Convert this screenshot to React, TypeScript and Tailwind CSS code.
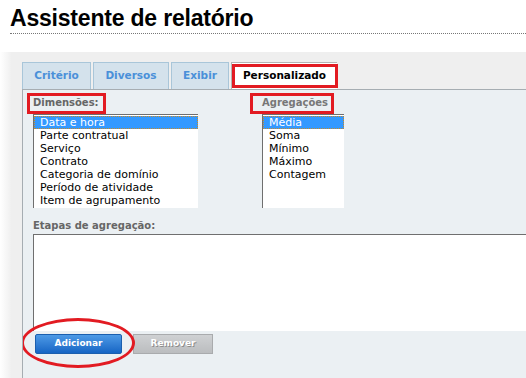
import React from "react";

const dims = [
  "Data e hora",
  "Parte contratual",
  "Serviço",
  "Contrato",
  "Categoria de domínio",
  "Período de atividade",
  "Item de agrupamento",
];

const aggs = ["Média", "Soma", "Mínimo", "Máximo", "Contagem"];

const ListBox = ({ items, width }: { items: string[]; width: string }) => (
  <div
    className={`${width} h-[94px] bg-white border-t border-l border-[#6f6f6f] pt-px pl-px overflow-hidden`}
  >
    {items.map((it, i) => (
      <div
        key={it}
        className={
          i === 0
            ? "h-[13px] leading-[12px] pl-[5px] bg-[#3399ff] text-white border border-dotted border-[#c58a2a] -ml-px"
            : "h-[13px] leading-[13px] pl-[5px] text-black"
        }
      >
        {it}
      </div>
    ))}
  </div>
);

const Tab = ({ label, active }: { label: string; active?: boolean }) =>
  active ? (
    <div className="h-[27px] w-[106px] bg-white border-t border-l border-[#b4b4b4] flex items-center justify-center text-black relative -mb-px">
      {label}
      <div className="absolute left-0 top-px w-[106px] h-[24px] border-[3px] border-[#e21b22]" />
    </div>
  ) : (
    <div className="h-[27px] bg-[#d4e2ec] border border-b-0 border-[#a9c6d9] flex items-center justify-center text-[#4a90d9]">
      {label}
    </div>
  );

export default function App() {
  return (
    <div className="w-[526px] h-[378px] overflow-hidden bg-white relative font-['DejaVu_Sans',Verdana,sans-serif] text-[11px]">
      <div className="pl-[10px] pt-[4px] h-[33px] font-['Liberation_Sans',Arial,sans-serif] font-bold text-[23px] leading-[28px] text-black tracking-[-0.2px]">
        Assistente de relatório
      </div>
      <div className="ml-[10px] border-t border-dotted border-[#777]" />
      <div className="flex mt-[18px] h-[400px]">
        <div className="w-[11px] shrink-0 bg-gradient-to-r from-white to-[#f0f0f0]" />
        <div className="flex-1 min-w-0 bg-[#efefef] pl-[11px] pt-[10px]">
          <div className="flex gap-[2px] font-bold text-[10.5px]">
            <div className="w-[69px]">
              <Tab label="Critério" />
            </div>
            <div className="w-[76px]">
              <Tab label="Diversos" />
            </div>
            <div className="w-[58px]">
              <Tab label="Exibir" />
            </div>
            <Tab label="Personalizado" active />
          </div>
          <div className="bg-[#ebf0f3] border-t border-l border-[#a6adb2] h-[300px] pl-[10px] pt-[6px] overflow-hidden">
            <div className="flex gap-[64px]">
              <div>
                <div className="relative h-[18px] font-bold text-[10px] text-[#666] leading-[14px]">
                  Dimensões:
                  <div className="absolute -left-[6px] -top-[3px] w-[79px] h-[21px] border-[3px] border-[#e21b22]" />
                </div>
                <ListBox items={dims} width="w-[165px]" />
              </div>
              <div>
                <div className="relative h-[18px] font-bold text-[10px] text-[#777] leading-[14px]">
                  Agregações
                  <div className="absolute -left-[12px] -top-[3px] w-[84px] h-[21px] border-[3px] border-[#e21b22]" />
                </div>
                <ListBox items={aggs} width="w-[82px]" />
              </div>
            </div>
            <div className="mt-[11px] h-[15px] font-bold text-[10px] text-[#666] leading-[14px]">
              Etapas de agregação:
            </div>
            <div className="h-[97px] w-[520px] bg-white border-t border-l border-[#6f6f6f]" />
            <div className="flex gap-[11px] ml-[2px] mt-[3px] relative">
              <div className="w-[87px] h-[20px] rounded-[2px] bg-gradient-to-b from-[#4d9ae6] to-[#1565c4] border border-[#1b5fae] text-white font-bold text-[9px] flex items-center justify-center">
                Adicionar
              </div>
              <div className="w-[80px] h-[20px] bg-gradient-to-b from-[#cfd1d3] to-[#bbbdbf] border border-[#a9abad] text-white font-bold text-[9px] flex items-center justify-center [text-shadow:1px_1px_0_#8c8c8c]">
                Remover
              </div>
              <div className="absolute -left-[14px] -top-[16px] w-[114px] h-[50px] rounded-[50%] border-[3px] border-[#e21b22]" />
            </div>
          </div>
        </div>
      </div>
    </div>
  );
}
